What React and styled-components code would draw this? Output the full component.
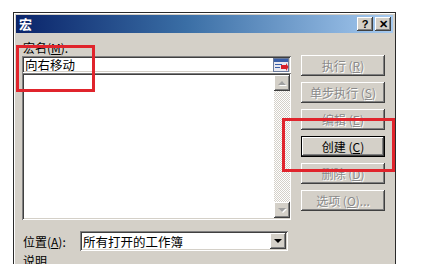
import React from 'react';
import styled, { createGlobalStyle, css } from 'styled-components';

const GlobalStyle = createGlobalStyle`
  html, body {
    margin: 0;
    padding: 0;
    background: #fff;
    overflow: hidden;
  }
  body {
    font-family: "Noto Sans CJK SC", "Liberation Sans", sans-serif;
    font-size: 12px;
    color: #000;
  }
`;

const raised = css`
  background: #d4d0c8;
  box-shadow: inset -1px -1px #404040, inset 1px 1px #fff, inset -2px -2px #808080,
    inset 2px 2px #d4d0c8;
`;

const sunken = css`
  box-shadow: inset 1px 1px #808080, inset -1px -1px #fff, inset 2px 2px #404040,
    inset -2px -2px #d4d0c8;
`;

const Page = styled.div`
  width: 424px;
  height: 264px;
  padding: 12px 0 0 13px;
  box-sizing: border-box;
  overflow: hidden;
`;

const Window = styled.div`
  position: relative;
  width: 383px;
  height: 280px;
  box-sizing: border-box;
  padding: 2px;
  background: #d4d0c8;
  border: 1px solid #2a2a2a;
  box-shadow: inset 1px 1px #fff;
`;

const TitleBar = styled.div`
  height: 18px;
  display: flex;
  align-items: center;
  justify-content: space-between;
  padding: 0 2px 0 3px;
  background: linear-gradient(to right, #0a246a 0%, #3a6ea5 45%, #a6caf0 100%);
`;

const Title = styled.span`
  color: #fff;
  font-weight: bold;
  font-size: 13px;
  line-height: 18px;
`;

const TitleButtons = styled.div`
  display: flex;
  gap: 2px;
`;

const CapButton = styled.div`
  ${raised};
  width: 16px;
  height: 14px;
  display: flex;
  align-items: center;
  justify-content: center;
  font-family: "Liberation Sans", sans-serif;
  font-weight: bold;
  font-size: 11px;
  line-height: 14px;
`;

const Client = styled.div`
  padding: 7px 4px 0 6px;
`;

const Label = styled.div`
  height: 15px;
  line-height: 15px;
  padding-left: 1px;
`;

const Main = styled.div`
  display: flex;
  gap: 10px;
`;

const LeftCol = styled.div`
  width: 269px;
  padding-top: 1px;
  display: flex;
  flex-direction: column;
`;

const Field = styled.div`
  ${sunken};
  background: #fff;
  height: 17px;
  display: flex;
  align-items: center;
  justify-content: space-between;
  padding: 0 2px 0 3px;
  font-size: 12.5px;
`;

const RefIcon = styled.div`
  width: 16px;
  height: 16px;
  display: flex;
`;

const List = styled.div`
  ${sunken};
  background: #fff;
  height: 147px;
  display: flex;
  justify-content: flex-end;
  padding: 2px 1px 2px 2px;
  box-sizing: border-box;
`;

const ScrollBar = styled.div`
  width: 16px;
  display: flex;
  flex-direction: column;
  justify-content: space-between;
  background: conic-gradient(#d4d0c8 25%, #fff 0 50%, #d4d0c8 0 75%, #fff 0) 0 0 / 2px 2px;
`;

const ArrowButton = styled.div`
  ${raised};
  width: 16px;
  height: 16px;
  display: flex;
  align-items: center;
  justify-content: center;
`;

const Arrow = styled.div`
  width: 0;
  height: 0;
  border-left: 4px solid transparent;
  border-right: 4px solid transparent;
  ${({ $up }) =>
    $up
      ? css`border-bottom: 4px solid ${({ $color }) => $color};`
      : css`border-top: 4px solid ${({ $color }) => $color};`}
  filter: ${({ $disabled }) => ($disabled ? 'drop-shadow(1px 1px 0 #fff)' : 'none')};
`;

const RightCol = styled.div`
  width: 84px;
  display: flex;
  flex-direction: column;
  gap: 6px;
`;

const Button = styled.div`
  ${raised};
  height: 21px;
  display: flex;
  align-items: center;
  justify-content: center;
  line-height: 21px;
  color: ${({ $disabled }) => ($disabled ? '#8a8a8a' : '#000')};
  text-shadow: ${({ $disabled }) => ($disabled ? '1px 1px 0 #fff' : 'none')};
  ${({ $default }) =>
    $default &&
    css`
      box-shadow: inset 0 0 0 1px #000, inset -2px -2px #404040, inset 2px 2px #fff,
        inset -3px -3px #808080;
    `}
`;

const Row = styled.div`
  display: flex;
  align-items: center;
  margin-top: 11px;
  height: 20px;
`;

const RowLabel = styled.div`
  width: 57px;
  padding-left: 1px;
`;

const Select = styled.div`
  ${sunken};
  background: #fff;
  width: 208px;
  height: 20px;
  box-sizing: border-box;
  display: flex;
  align-items: center;
  justify-content: space-between;
  padding: 0 2px 0 3px;
  font-size: 12.5px;
`;

const Group = styled.div`
  display: flex;
  align-items: center;
  gap: 3px;
  margin-top: 3px;
  padding-left: 1px;
  line-height: 14px;
`;

const GroupLine = styled.div`
  flex: 1;
  height: 1px;
  border-top: 1px solid #808080;
  border-bottom: 1px solid #fff;
  margin-top: 8px;
`;

const Mark = styled.div`
  position: absolute;
  left: ${({ $x }) => $x}px;
  top: ${({ $y }) => $y}px;
  width: ${({ $w }) => $w}px;
  height: ${({ $h }) => $h}px;
  box-sizing: border-box;
  border: 3px solid #e0242c;
  pointer-events: none;
`;

const buttons = [
  { key: 'R', label: '执行', disabled: true },
  { key: 'S', label: '单步执行', disabled: true },
  { key: 'E', label: '编辑', disabled: true },
  { key: 'C', label: '创建', default: true },
  { key: 'D', label: '删除', disabled: true },
  { key: 'O', label: '选项', disabled: true, suffix: '...' },
];

function RefEditIcon() {
  return (
    <svg width="16" height="16" viewBox="0 0 16 16">
      <rect x="0.5" y="1.5" width="15" height="13" fill="#e8e8f0" stroke="#6a7a9a" />
      <rect x="1" y="2" width="14" height="3" fill="#3a5fa8" />
      <line x1="2" y1="7.5" x2="9" y2="7.5" stroke="#3a5fa8" />
      <line x1="2" y1="10.5" x2="7" y2="10.5" stroke="#3a5fa8" />
      <path d="M8 8 L13 8 L13 6 L15.5 10 L13 14 L13 12 L8 12 Z" fill="#d8202a" />
    </svg>
  );
}

export default function App() {
  return (
    <Page>
      <GlobalStyle />
      <Window>
        <TitleBar>
          <Title>宏</Title>
          <TitleButtons>
            <CapButton>?</CapButton>
            <CapButton>✕</CapButton>
          </TitleButtons>
        </TitleBar>
        <Client>
          <Label>
            宏名(<u>M</u>):
          </Label>
          <Main>
            <LeftCol>
              <Field>
                <span>向右移动</span>
                <RefIcon>
                  <RefEditIcon />
                </RefIcon>
              </Field>
              <List>
                <ScrollBar>
                  <ArrowButton>
                    <Arrow $up $color="#a0a0a0" $disabled />
                  </ArrowButton>
                  <ArrowButton>
                    <Arrow $color="#a0a0a0" $disabled />
                  </ArrowButton>
                </ScrollBar>
              </List>
            </LeftCol>
            <RightCol>
              {buttons.map((b) => (
                <Button key={b.key} $disabled={b.disabled} $default={b.default}>
                  {b.label} (<u>{b.key}</u>){b.suffix || ''}
                </Button>
              ))}
            </RightCol>
          </Main>
          <Row>
            <RowLabel>
              位置(<u>A</u>):
            </RowLabel>
            <Select>
              <span>所有打开的工作簿</span>
              <ArrowButton>
                <Arrow $color="#000" />
              </ArrowButton>
            </Select>
          </Row>
          <Group>
            <span>说明</span>
            <GroupLine />
          </Group>
        </Client>
        <Mark $x={2} $y={32} $w={79} $h={47} />
        <Mark $x={268} $y={105} $w={113} $h={54} />
      </Window>
    </Page>
  );
}
